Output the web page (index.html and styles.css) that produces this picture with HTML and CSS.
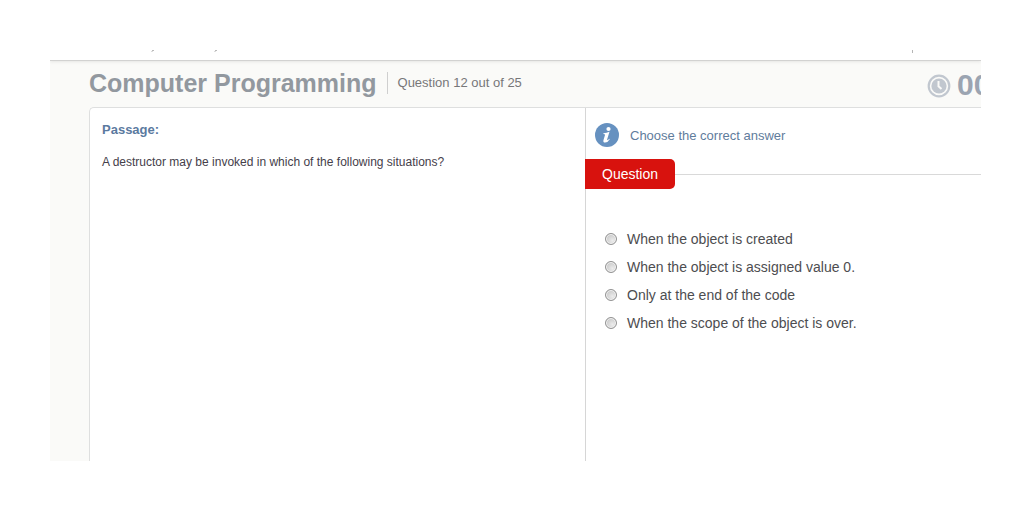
FILE: index.html
```
<!DOCTYPE html>
<html lang="en">
<head>
<meta charset="utf-8">
<title>Computer Programming</title>
<link rel="stylesheet" href="styles.css">
</head>
<body>
<main class="frame">
  <div class="topbar">
    <svg class="marks" width="80" height="2" viewBox="0 0 80 2" aria-hidden="true"><path d="M2.500 0L1 1.500M65.500 0L64 1.500" stroke="#777" fill="none"/></svg>
    <svg class="marks" width="2" height="3" viewBox="0 0 2 3" aria-hidden="true"><path d="M.5 0v3" stroke="#b5b5b5"/></svg>
  </div>
  <header class="header">
    <h1 class="title">Computer Programming</h1>
    <p class="progress">Question 12 out of 25</p>
    <div class="timer">
      <svg width="24" height="24" viewBox="0 0 24 24" aria-hidden="true">
        <circle cx="12" cy="12" r="10.300" fill="#fafaf8" stroke="#c1c7cf" stroke-width="2.200"/>
        <circle cx="12" cy="12" r="7.600" fill="#c1c7cf"/>
        <path d="M11.500 7v5.200l3 2.800" fill="none" stroke="#fafaf8" stroke-width="2"/>
      </svg>
      <span class="time">00</span>
    </div>
  </header>
  <div class="panel">
    <section class="passage">
      <h2 class="passage-title">Passage:</h2>
      <p class="passage-text">A destructor may be invoked in which of the following situations?</p>
    </section>
    <section class="question">
      <div class="hint">
        <svg width="24" height="24" viewBox="0 0 24 24" aria-hidden="true">
          <circle cx="12" cy="12" r="12" fill="#6691c0"/>
          <circle cx="13.500" cy="6" r="2.100" fill="#fff"/>
          <path d="M8.500 10.200q3-.2 6-1.400l-2.300 7.500q-.3 1.100.4.800.7-.3 1.500-1.400l.7.500q-2 3.300-4.700 3.300-2.300-.1-1.600-2.600l1.500-4.800q.3-1-1.700-1z" fill="#fff"/>
        </svg>
        <span>Choose the correct answer</span>
      </div>
      <div class="tag-row"><span class="tag">Question</span></div>
      <form class="answers">
        <label class="answer"><input class="radio" type="radio" name="answer">When the object is created</label>
        <label class="answer"><input class="radio" type="radio" name="answer">When the object is assigned value 0.</label>
        <label class="answer"><input class="radio" type="radio" name="answer">Only at the end of the code</label>
        <label class="answer"><input class="radio" type="radio" name="answer">When the scope of the object is over.</label>
      </form>
    </section>
  </div>
</main>
</body>
</html>
```
FILE: styles.css
```
* { box-sizing: border-box; }
body {
  margin: 0;
  padding: 50px;
  height: 100vh;
  background: #fff;
  font-family: "Liberation Sans", Arial, sans-serif;
  color: #4d4d50;
}
h1, h2, p { margin: 0; }
.frame {
  display: flex;
  flex-direction: column;
  height: 100%;
  overflow: hidden;
  background: #fafaf8;
}
.topbar {
  display: flex;
  justify-content: space-between;
  flex: none;
  height: 11px;
  padding: 0 67px 0 101px;
  background: #fff;
  border-bottom: 1px solid #d2d2d1;
  box-shadow: 0 1px 3px #e6e6e4;
}
.marks { display: block; }
.header {
  display: flex;
  align-items: center;
  flex: none;
  height: 46px;
  padding: 0 0 3px 39px;
  white-space: nowrap;
}
.title {
  font-size: 25px;
  line-height: 28px;
  color: #92989f;
}
.progress {
  margin-left: 10px;
  padding-left: 10px;
  border-left: 1px solid #cfcfcf;
  font-size: 13px;
  line-height: 22px;
  color: #777779;
}
.timer {
  display: flex;
  align-items: center;
  gap: 6px;
  width: 54px;
  margin-left: auto;
  padding-top: 6px;
  overflow: hidden;
}
.timer svg { flex: none; }
.time {
  padding-bottom: 2px;
  font-size: 30px;
  line-height: 30px;
  font-weight: bold;
  color: #9ba4b1;
}
.panel {
  display: grid;
  grid-template-columns: 496px 1fr;
  flex: 1;
  margin-left: 39px;
  background: #fff;
  border: 1px solid #dedfdf;
  border-width: 1px 0 0 1px;
  border-top-left-radius: 5px;
}
.passage { padding: 13px 12px; }
.passage-title {
  font-size: 13px;
  line-height: 18px;
  color: #5b7a9f;
}
.passage-text {
  margin-top: 14px;
  font-size: 12px;
  line-height: 18px;
  color: #45404a;
}
.question { border-left: 1px solid #d6d6d6; margin-left: -1px; }
.hint {
  display: flex;
  align-items: center;
  gap: 11px;
  padding: 15px 0 0 9px;
  font-size: 13px;
  color: #5f7c9c;
}
.tag-row {
  display: flex;
  align-items: center;
  margin: 12px 0 0 -1px;
}
.tag-row::after {
  content: "";
  flex: 1;
  height: 1px;
  background: #d9d9d9;
}
.tag {
  padding: 0 17px;
  border-radius: 0 5px 5px 0;
  background: #d8120e;
  color: #fff;
  font-size: 14px;
  line-height: 30px;
}
.answers {
  display: grid;
  padding: 36px 0 0 19px;
}
.answer {
  display: flex;
  align-items: center;
  gap: 10px;
  font-size: 14px;
  line-height: 28px;
}
.radio {
  appearance: none;
  width: 12px;
  height: 12px;
  margin: 0;
  border: 1px solid #929292;
  border-radius: 50%;
  background: radial-gradient(circle at 65% 65%, #ececec, #bcbcbc);
  box-shadow: inset 0 0 0 1px #f4f4f4;
}
.radio:checked { background: radial-gradient(circle, #444 30%, #ececec 40%); }
```
